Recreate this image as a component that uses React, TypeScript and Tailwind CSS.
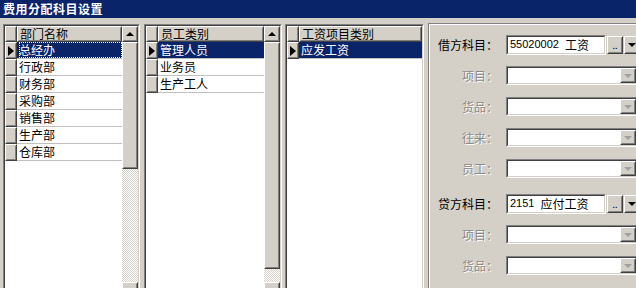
import React from "react";

const FONT = "font-['Noto_Sans_CJK_SC','Noto_Sans',sans-serif]";
const NAVY = "bg-[#0a246a]";

function Raised({ className = "", innerClassName = "", children }: { className?: string; innerClassName?: string; children?: React.ReactNode }) {
  return (
    <div className={`border border-t-white border-l-white border-b-[#404040] border-r-[#404040] bg-[#d4d0c8] ${className}`}>
      <div className={`w-full h-full border border-t-[#d4d0c8] border-l-[#d4d0c8] border-b-[#808080] border-r-[#808080] ${innerClassName}`}>
        {children}
      </div>
    </div>
  );
}

function Sunken({ className = "", innerClassName = "", children }: { className?: string; innerClassName?: string; children?: React.ReactNode }) {
  return (
    <div className={`border border-t-[#808080] border-l-[#808080] border-b-white border-r-white ${className}`}>
      <div className={`w-full h-full border border-t-[#404040] border-l-[#404040] border-b-[#d4d0c8] border-r-[#d4d0c8] ${innerClassName}`}>
        {children}
      </div>
    </div>
  );
}

function RightTri() {
  return <div className="w-0 h-0 border-y-[5px] border-y-transparent border-l-[6px] border-l-black" />;
}

function UpTri() {
  return <div className="w-0 h-0 border-x-[4px] border-x-transparent border-b-[4px] border-b-black" />;
}

function DownTri({ disabled = false }: { disabled?: boolean }) {
  return (
    <div
      className={`w-0 h-0 border-x-[4px] border-x-transparent border-t-[4px] ${disabled ? "border-t-[#a0a0a0]" : "border-t-black"}`}
    />
  );
}

function Scrollbar({ thumbClass }: { thumbClass: string }) {
  return (
    <div className="w-[16px] flex flex-col shrink-0">
      <Raised className="h-[16px] shrink-0" innerClassName="flex items-center justify-center">
        <UpTri />
      </Raised>
      <Raised className={`${thumbClass} shrink-0`} />
      <div className="flex-1 bg-[repeating-conic-gradient(#d4d0c8_0_25%,#ffffff_0_50%)] bg-[length:2px_2px]" />
      <Raised className="h-[16px] shrink-0" innerClassName="flex items-center justify-center">
        <DownTri />
      </Raised>
    </div>
  );
}

function GridPanel({
  frameClass,
  header,
  rows,
  focus,
  scrollbar,
}: {
  frameClass: string;
  header: string;
  rows: string[];
  focus?: boolean;
  scrollbar?: React.ReactNode;
}) {
  return (
    <Sunken className={`${frameClass} h-[276px] shrink-0`} innerClassName="flex bg-white">
      <div className="flex-1 flex flex-col min-w-0">
        <div className="flex h-[16px] shrink-0">
          <Raised className="w-[12px] shrink-0" />
          <Raised className="flex-1" innerClassName="flex items-center pl-[1px] text-[12px] leading-none text-black">
            {header}
          </Raised>
        </div>
        {rows.map((r, i) => (
          <div key={r} className="flex h-[17px] shrink-0">
            <Raised className="w-[12px] shrink-0" innerClassName="flex items-center justify-center">
              {i === 0 ? <RightTri /> : null}
            </Raised>
            <div
              className={`flex-1 flex items-center pl-[2px] text-[12px] leading-none border-b border-b-[#c0c0c0] ${
                i === 0 ? `${NAVY} text-white` : "bg-white text-black"
              }`}
            >
              <div
                className={`h-full flex items-center flex-1 ${
                  i === 0 && focus ? "outline outline-1 outline-dotted outline-white -outline-offset-1" : ""
                }`}
              >
                {r}
              </div>
            </div>
          </div>
        ))}
      </div>
      {scrollbar}
    </Sunken>
  );
}

function FieldRow({
  label,
  enabled,
  value,
  className = "",
}: {
  label: string;
  enabled: boolean;
  value?: React.ReactNode;
  className?: string;
}) {
  return (
    <div className={`flex items-center h-[19px] shrink-0 ${className}`}>
      <div
        className={`w-[63px] shrink-0 text-right text-[12px] leading-none ${
          enabled ? "text-black" : "text-[#8a8a8a] [text-shadow:1px_1px_0_#ffffff]"
        }`}
      >
        {label}
      </div>
      <div className="w-[8px] shrink-0" />
      {enabled ? (
        <div className="flex items-center h-[20px] shrink-0">
          <Sunken className="w-[100px] h-[20px] shrink-0" innerClassName="bg-white flex items-center pl-[2px] text-[12px] leading-none text-black whitespace-nowrap">
            {value}
          </Sunken>
          <Raised className="w-[16px] h-[18px] ml-[1px] shrink-0" innerClassName="flex items-end justify-center pb-[2px] text-[9px] leading-none text-black">
            ..
          </Raised>
          <Raised className="w-[16px] h-[18px] ml-[1px] shrink-0" innerClassName="flex items-center justify-center">
            <DownTri />
          </Raised>
        </div>
      ) : (
        <Sunken className="w-[132px] h-[19px] shrink-0" innerClassName="bg-white flex justify-end">
          <Raised className="w-[16px] h-full shrink-0" innerClassName="flex items-center justify-center">
            <DownTri disabled />
          </Raised>
        </Sunken>
      )}
    </div>
  );
}

export default function App() {
  return (
    <div className={`w-[636px] h-[288px] overflow-hidden bg-[#d4d0c8] ${FONT} flex flex-col`}>
      <div className={`h-[18px] shrink-0 ${NAVY} flex items-center pl-[3px]`}>
        <span className="text-white text-[12px] font-bold tracking-[0.5px] leading-none">费用分配科目设置</span>
      </div>
      <div className="flex items-start pt-[6px] pl-[3px] gap-[4px] shrink-0">
        <GridPanel
          frameClass="w-[137px]"
          header="部门名称"
          rows={["总经办", "行政部", "财务部", "采购部", "销售部", "生产部", "仓库部"]}
          focus
          scrollbar={<Scrollbar thumbClass="h-[127px]" />}
        />
        <GridPanel
          frameClass="w-[138px]"
          header="员工类别"
          rows={["管理人员", "业务员", "生产工人"]}
          scrollbar={<Scrollbar thumbClass="h-[227px]" />}
        />
        <GridPanel frameClass="w-[139px] -ml-[1px]" header="工资项目类别" rows={["应发工资"]} />
        <div className="flex-1 min-w-0 h-[280px] -mt-[1px] border border-t-[#808080] border-l-[#808080] border-r-0 border-b-0">
          <div className="w-full h-full border border-t-white border-l-white border-r-0 border-b-0 flex flex-col pt-[10px] pl-[5px] gap-[12px]">
            <FieldRow
              label="借方科目："
              enabled
              value={
                <>
                  <span className="font-['Liberation_Sans',sans-serif] text-[11px]">55020002</span>
                  <span className="ml-[6px]">工资</span>
                </>
              }
            />
            <FieldRow label="项目：" enabled={false} />
            <FieldRow label="货品：" enabled={false} />
            <FieldRow label="往来：" enabled={false} />
            <FieldRow label="员工：" enabled={false} />
            <FieldRow
              label="贷方科目："
              enabled
              className="mt-[4px]"
              value={
                <>
                  <span className="font-['Liberation_Sans',sans-serif] text-[11px]">2151</span>
                  <span className="ml-[6px]">应付工资</span>
                </>
              }
            />
            <FieldRow label="项目：" enabled={false} />
            <FieldRow label="货品：" enabled={false} />
          </div>
        </div>
      </div>
    </div>
  );
}
